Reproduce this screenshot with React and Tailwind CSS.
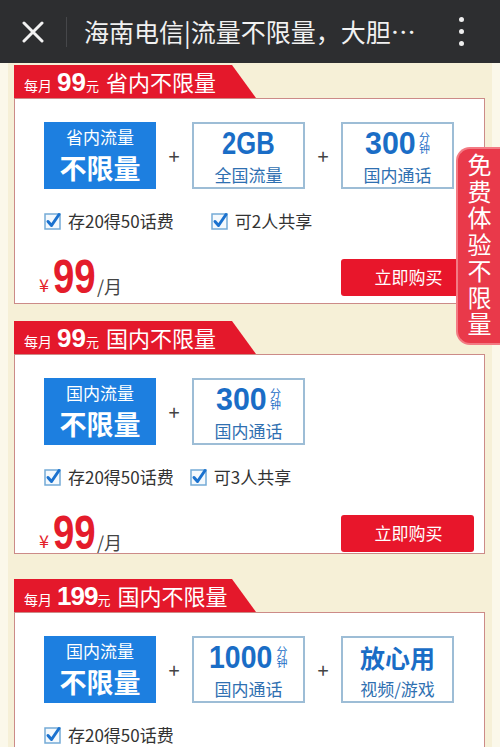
import React from 'react';

const CJK = "font-['Noto_Sans_CJK_SC','Noto_Sans',sans-serif]";
const NUM = "font-['Liberation_Sans','Arial',sans-serif] font-bold";

function Check() {
  return (
    <svg width="18" height="18" viewBox="0 0 18 18" className="shrink-0">
      <rect x="1" y="2" width="15" height="15" fill="#f4f9fd" stroke="#74aad6" strokeWidth="1.5" />
      <path d="M4 9.5 L7.5 13.5 L15 2.5" fill="none" stroke="#1b72cf" strokeWidth="3" strokeLinecap="round" strokeLinejoin="round" />
    </svg>
  );
}

function Plus() {
  return <div className="w-[36px] text-center text-[20px] text-[#444] leading-none">+</div>;
}

function BlueBox({ top }) {
  return (
    <div className="w-[112px] h-[67px] bg-[#1d7fe0] flex flex-col items-center justify-center text-white">
      <div className="text-[17px] leading-[25px]">{top}</div>
      <div className="text-[27px] leading-[39px] font-bold -mt-[1px]">不限量</div>
    </div>
  );
}

function OutlineBox({ children, label }) {
  return (
    <div className="w-[113px] h-[67px] bg-white border-2 border-[#9dbdd6] flex flex-col items-center justify-center">
      <div className="h-[37px] flex items-center text-[#1a6dc6]">{children}</div>
      <div className="text-[17px] leading-[25px] text-[#2f70b1]">{label}</div>
    </div>
  );
}

function Minutes({ num, w }) {
  return (
    <div className="flex items-center">
      <span className={`${NUM} inline-block origin-left text-[32px] leading-[37px] whitespace-nowrap ${w}`}>{num}</span>
      <span className="[writing-mode:vertical-rl] text-[11px] leading-[12px] ml-[3px] text-[#1a6dc6]">分钟</span>
    </div>
  );
}

function Ribbon({ price, wide, text }) {
  return (
    <div className="w-[242px] h-[33px] bg-[#e4182b] [clip-path:polygon(0_0,218px_0,100%_100%,0_100%)] flex items-end pl-[10px] pb-[3px] text-white">
      <span className="text-[14px] leading-[20px]">每月</span>
      <span className={`${NUM} text-[26px] leading-[26px] ml-[5px] ${wide ? 'tracking-[-1px]' : ''}`}>{price}</span>
      <span className="text-[13px] leading-[18px]">元</span>
      <span className="text-[22px] leading-[27px] ml-[7px]">{text}</span>
    </div>
  );
}

function Price() {
  return (
    <div className="flex items-end pl-[24px]">
      <span className="text-[18px] text-[#e41f2b] leading-[20px] mb-[3px]">¥</span>
      <span className={`${NUM} inline-block w-[43px] origin-left scale-x-[0.8] text-[48px] leading-[40px] text-[#e41c2b] whitespace-nowrap ml-[4px]`}>99</span>
      <span className="text-[18px] text-[#444] leading-[20px] mb-[1px] ml-[1px]">/月</span>
    </div>
  );
}

function Card({ mt, price, title, boxes, checks, gap, bodyH, showPrice }) {
  return (
    <div className={`ml-[6px] w-[471px] ${mt}`}>
      <Ribbon price={price} text={title} wide={price.length > 2} />
      <div className={`border border-[#cc8b88] bg-white pl-[29px] pt-[23px] ${bodyH}`}>
        <div className="flex items-center">{boxes}</div>
        <div className="flex items-center mt-[22px] h-[20px]">
          <div className="flex items-center gap-[6px]">
            <Check />
            <span className="text-[17px] text-[#333]">存20得50话费</span>
          </div>
          {checks && (
            <div className={`flex items-center gap-[6px] ${gap}`}>
              <Check />
              <span className="text-[17px] text-[#333]">{checks}</span>
            </div>
          )}
        </div>
        {showPrice && (
          <div className="flex items-center justify-between mt-[26px] pr-[10px] -ml-[29px]">
            <Price />
            <button className="w-[133px] h-[37px] rounded-[3px] bg-[#e8162b] text-white text-[17px] pl-[2px]">立即购买</button>
          </div>
        )}
      </div>
    </div>
  );
}

export default function App() {
  return (
    <div className={`w-[500px] h-[747px] overflow-hidden bg-[#fbf8ea] relative ${CJK}`}>
      {/* top bar */}
      <div className="h-[63px] bg-[#2d2e30] flex items-center">
        <div className="w-[66px] flex justify-center">
          <svg width="22" height="22" viewBox="0 0 22 22">
            <path d="M2 2 L20 20 M20 2 L2 20" stroke="#f2f2f2" strokeWidth="3" strokeLinecap="round" />
          </svg>
        </div>
        <div className="w-px h-[30px] bg-[#46474a]" />
        <div className="ml-[17px] text-[25px] text-[#f1f1f1] leading-none whitespace-nowrap">海南电信|流量不限量，大胆…</div>
        <div className="ml-auto mr-[36px] flex flex-col gap-[7px]">
          <span className="w-[5px] h-[5px] rounded-full bg-[#eee]" />
          <span className="w-[5px] h-[5px] rounded-full bg-[#eee]" />
          <span className="w-[5px] h-[5px] rounded-full bg-[#eee]" />
        </div>
      </div>

      {/* content */}
      <div className="mx-[8px] bg-[#f6f0d7] pt-[2px] h-[684px]">
        <Card
          mt="mt-0"
          price="99"
          title="省内不限量"
          bodyH="h-[206px]"
          gap="ml-[37px]"
          checks="可2人共享"
          showPrice
          boxes={
            <>
              <BlueBox top="省内流量" />
              <Plus />
              <OutlineBox label="全国流量">
                <span className={`${NUM} inline-block w-[54px] origin-left scale-x-[0.8] text-[32px] leading-[37px] whitespace-nowrap`}>2GB</span>
              </OutlineBox>
              <Plus />
              <OutlineBox label="国内通话">
                <Minutes num="300" w="w-[51px] scale-x-[0.95]" />
              </OutlineBox>
            </>
          }
        />
        <Card
          mt="mt-[17px]"
          price="99"
          title="国内不限量"
          bodyH="h-[200px]"
          gap="ml-[16px]"
          checks="可3人共享"
          showPrice
          boxes={
            <>
              <BlueBox top="国内流量" />
              <Plus />
              <OutlineBox label="国内通话">
                <Minutes num="300" w="w-[51px] scale-x-[0.95]" />
              </OutlineBox>
            </>
          }
        />
        <Card
          mt="mt-[25px]"
          price="199"
          title="国内不限量"
          bodyH="h-[200px]"
          boxes={
            <>
              <BlueBox top="国内流量" />
              <Plus />
              <OutlineBox label="国内通话">
                <Minutes num="1000" w="w-[64px] scale-x-[0.89]" />
              </OutlineBox>
              <Plus />
              <OutlineBox label="视频/游戏">
                <span className="text-[25px] font-bold leading-[37px]">放心用</span>
              </OutlineBox>
            </>
          }
        />
      </div>

      {/* side badge */}
      <div className="absolute top-[147px] right-0 w-[44px] h-[198px] rounded-l-[14px] bg-[#e9394a] border-2 border-r-0 border-[#f37b84] flex items-center justify-center text-white">
        <span className="[writing-mode:vertical-rl] text-[24px] leading-[28px] tracking-[2.5px]">免费体验不限量</span>
      </div>
    </div>
  );
}
